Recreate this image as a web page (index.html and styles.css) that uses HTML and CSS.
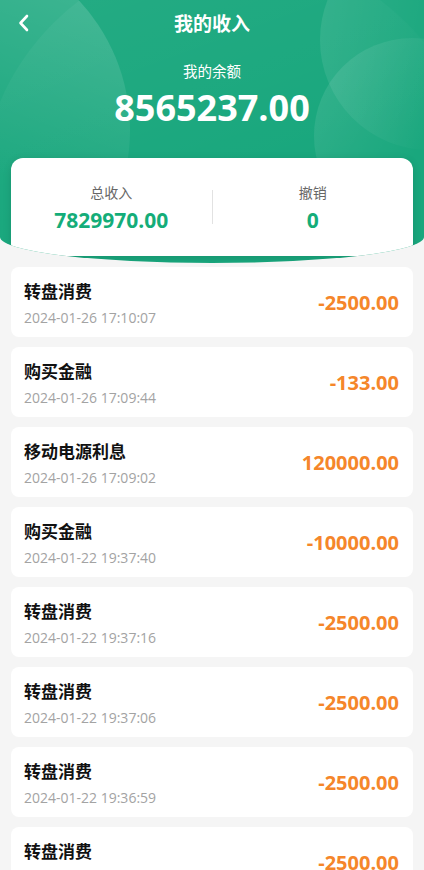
FILE: index.html
```html
<!DOCTYPE html>
<html lang="zh-CN">
<head>
    <meta charset="UTF-8">
    <meta name="viewport" content="width=device-width, initial-scale=1.0">
    <title>我的收入</title>
    <link rel="stylesheet" href="styles.css">
</head>
<body>
    <div class="hero">
        <div class="bubble bubble-a"></div>
        <div class="bubble bubble-b"></div>
        <div class="bubble bubble-c"></div>
        <div class="bubble bubble-d"></div>

        <div class="nav">
            <a class="back" href="#">
                <svg width="14" height="20" viewBox="0 0 14 20"><path d="M10 3 L3.5 10 L10 17" fill="none" stroke="#fff" stroke-width="2.6" stroke-linecap="round" stroke-linejoin="round"/></svg>
            </a>
            <h1>我的收入</h1>
        </div>

        <div class="balance-label">我的余额</div>
        <div class="balance">8565237.00</div>

        <div class="summary">
            <div class="summary-item">
                <div class="summary-label">总收入</div>
                <div class="summary-value">7829970.00</div>
            </div>
            <div class="summary-line"></div>
            <div class="summary-item">
                <div class="summary-label">撤销</div>
                <div class="summary-value">0</div>
            </div>
        </div>
    </div>

    <div class="list">
        <div class="record">
            <div class="record-info">
                <div class="record-title">转盘消费</div>
                <div class="record-time">2024-01-26 17:10:07</div>
            </div>
            <div class="record-amount">-2500.00</div>
        </div>
        <div class="record">
            <div class="record-info">
                <div class="record-title">购买金融</div>
                <div class="record-time">2024-01-26 17:09:44</div>
            </div>
            <div class="record-amount">-133.00</div>
        </div>
        <div class="record">
            <div class="record-info">
                <div class="record-title">移动电源利息</div>
                <div class="record-time">2024-01-26 17:09:02</div>
            </div>
            <div class="record-amount">120000.00</div>
        </div>
        <div class="record">
            <div class="record-info">
                <div class="record-title">购买金融</div>
                <div class="record-time">2024-01-22 19:37:40</div>
            </div>
            <div class="record-amount">-10000.00</div>
        </div>
        <div class="record">
            <div class="record-info">
                <div class="record-title">转盘消费</div>
                <div class="record-time">2024-01-22 19:37:16</div>
            </div>
            <div class="record-amount">-2500.00</div>
        </div>
        <div class="record">
            <div class="record-info">
                <div class="record-title">转盘消费</div>
                <div class="record-time">2024-01-22 19:37:06</div>
            </div>
            <div class="record-amount">-2500.00</div>
        </div>
        <div class="record">
            <div class="record-info">
                <div class="record-title">转盘消费</div>
                <div class="record-time">2024-01-22 19:36:59</div>
            </div>
            <div class="record-amount">-2500.00</div>
        </div>
        <div class="record">
            <div class="record-info">
                <div class="record-title">转盘消费</div>
                <div class="record-time">2024-01-22 19:36:50</div>
            </div>
            <div class="record-amount">-2500.00</div>
        </div>
    </div>
</body>
</html>
```

FILE: styles.css
```css
body {
    margin: 0;
    padding: 0;
    background-color: #f5f5f5;
    font-family: "Open Sans", "Noto Sans CJK SC", sans-serif;
    color: #111;
}
.hero {
    position: relative;
    overflow: hidden;
    background-color: #19a77d;
    border-radius: 0 0 50% 50% / 0 0 26px 26px;
    padding: 0 11px 7px;
    display: flex;
    flex-direction: column;
    align-items: center;
}
.bubble {
    position: absolute;
    border-radius: 50%;
}
.bubble-a {
    left: -250px;
    top: -60px;
    width: 380px;
    height: 380px;
    background: linear-gradient(200deg, rgba(255, 255, 255, 0.15) 15%, rgba(255, 255, 255, 0) 55%);
}
.bubble-b {
    left: -20px;
    top: -50px;
    width: 500px;
    height: 500px;
    background: linear-gradient(160deg, rgba(255, 255, 255, 0.06), rgba(255, 255, 255, 0) 50%);
}
.bubble-c {
    left: 320px;
    top: -70px;
    width: 220px;
    height: 220px;
    background: linear-gradient(100deg, rgba(255, 255, 255, 0.1), rgba(255, 255, 255, 0) 60%);
}
.bubble-d {
    left: 314px;
    top: 38px;
    width: 196px;
    height: 196px;
    background: linear-gradient(120deg, rgba(255, 255, 255, 0.12), rgba(255, 255, 255, 0) 55%);
}
.nav {
    position: relative;
    align-self: stretch;
    height: 46px;
    display: flex;
    align-items: center;
    justify-content: center;
}
.back {
    position: absolute;
    left: 6px;
    top: 13px;
    display: flex;
}
.nav h1 {
    margin: 0;
    font-size: 19px;
    font-weight: 700;
    color: #fff;
}
.balance-label {
    position: relative;
    margin-top: 16px;
    font-size: 14.5px;
    line-height: 20px;
    color: #fff;
}
.balance {
    position: relative;
    margin-top: 4px;
    font-size: 36px;
    line-height: 44px;
    font-weight: 700;
    color: #fff;
}
.summary {
    position: relative;
    align-self: stretch;
    margin-top: 28px;
    height: 98px;
    background-color: #fff;
    border-radius: 12px;
    box-shadow: 0 2px 8px rgba(0, 0, 0, 0.12);
    display: flex;
    align-items: center;
}
.summary-item {
    flex: 1;
    text-align: center;
    padding-top: 3px;
}
.summary-line {
    width: 1px;
    height: 34px;
    background-color: #e2e2e2;
}
.summary-label {
    font-size: 14px;
    line-height: 20px;
    color: #666;
}
.summary-value {
    margin-top: 3px;
    font-size: 21px;
    line-height: 28px;
    font-weight: 700;
    color: #14ad79;
}
.list {
    padding: 4px 11px 0;
    display: flex;
    flex-direction: column;
    gap: 10px;
}
.record {
    height: 70px;
    box-sizing: border-box;
    padding: 0 14px 0 13px;
    background-color: #fff;
    border-radius: 8px;
    display: flex;
    align-items: center;
    justify-content: space-between;
}
.record-info {
    padding-top: 3px;
}
.record-title {
    font-size: 17px;
    line-height: 24px;
    font-weight: 700;
    color: #111;
}
.record-time {
    margin-top: 4px;
    font-size: 14px;
    line-height: 20px;
    color: #a3a3a3;
}
.record-amount {
    font-size: 20px;
    font-weight: 700;
    color: #f5862a;
}
```
